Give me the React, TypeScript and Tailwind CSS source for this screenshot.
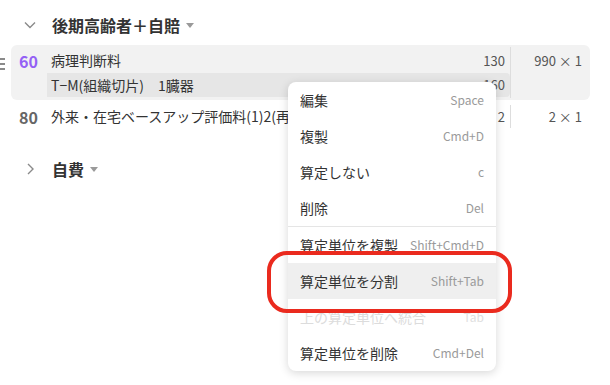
import { ReactNode } from 'react';

function ChevronDown() {
    return (
        <svg width="12" height="8" viewBox="0 0 12 8" fill="none">
            <path d="M1 1.5L6 6.5L11 1.5" stroke="#8a8a8a" strokeWidth="1.4" />
        </svg>
    );
}

function ChevronRight() {
    return (
        <svg width="12" height="12" viewBox="0 0 12 12" fill="none">
            <path d="M4 1L9 6L4 11" stroke="#8a8a8a" strokeWidth="1.4" />
        </svg>
    );
}

function Caret() {
    return (
        <svg width="8" height="5" viewBox="0 0 8 5">
            <path d="M0 0H8L4 5Z" fill="#9a9a9a" />
        </svg>
    );
}

function MenuItem({ label, shortcut, disabled, active }: { label: string; shortcut: string; disabled?: boolean; active?: boolean }) {
    return (
        <div
            className={`flex items-center justify-between h-[36px] px-[12px] ${active ? 'bg-[#efefef]' : ''}`}
        >
            <span className={`text-[14px] ${disabled ? 'text-[#dcdcdc]' : 'text-[#333]'}`}>{label}</span>
            <span className={`text-[12px] ${disabled ? 'text-[#e0e0e0]' : 'text-[#9a9a9a]'}`}>{shortcut}</span>
        </div>
    );
}

function Section({ open, title }: { open: boolean; title: ReactNode }) {
    return (
        <div className="flex items-center h-[22px] pl-[24px]">
            <div className="w-[12px] flex justify-center">{open ? <ChevronDown /> : <ChevronRight />}</div>
            <span className="ml-[16px] text-[16px] font-bold text-[#333] leading-none">{title}</span>
            <span className="ml-[6px] flex items-center">
                <Caret />
            </span>
        </div>
    );
}

export default function App() {
    return (
        <div className="relative w-[610px] h-[385px] bg-white overflow-hidden font-['Noto_Sans_CJK_JP','Noto_Sans',sans-serif] text-[#333]">
            <div className="pt-[14px]">
                {/* 後期高齢者＋自賠 */}
                <Section open title="後期高齢者＋自賠" />

                {/* selected row */}
                <div className="flex mt-[9px]">
                    <div className="w-[11px] flex flex-col gap-[3px] pt-[13px]">
                        <div className="w-[5px] h-[2px] bg-[#8a8a8a]" />
                        <div className="w-[5px] h-[2px] bg-[#8a8a8a]" />
                        <div className="w-[5px] h-[2px] bg-[#8a8a8a]" />
                    </div>
                    <div className="flex w-[579px] h-[55px] rounded-md bg-[#f2f2f2]">
                        <div className="w-[36px] pl-[8px] pt-[3px]">
                            <div className="h-[25px] flex items-center text-[16px] font-bold text-[#9461f5]">60</div>
                        </div>
                        <div className="w-[463px] pt-[3px]">
                            <div className="h-[25px] flex items-center justify-between pl-[4px] pr-[5px]">
                                <span className="text-[14px]">病理判断料</span>
                                <span className="text-[13px] text-[#555]">130</span>
                            </div>
                            <div className="h-[24px] flex items-center justify-between pl-[4px] pr-[5px] bg-[#e6e6e6] rounded-r">
                                <span className="text-[14px]">T−M(組織切片)　1臓器</span>
                                <span className="text-[13px] text-[#555]">160</span>
                            </div>
                        </div>
                        <div className="flex-1 my-[2px] border-l border-[#dddddd] pt-[1px]">
                            <div className="h-[25px] flex items-center justify-end pr-[8px] text-[13px] text-[#555]">990 × 1</div>
                        </div>
                    </div>
                </div>

                {/* row 2 */}
                <div className="flex mt-[5px] ml-[11px] w-[579px] h-[23px]">
                    <div className="w-[36px] pl-[8px] flex items-center text-[16px] font-bold text-[#666]">80</div>
                    <div className="w-[463px] min-w-0 flex items-center justify-between pl-[4px] pr-[5px]">
                        <span className="text-[14px] whitespace-nowrap overflow-hidden">外来・在宅ベースアップ評価料(1)2(再診時)</span>
                        <span className="text-[13px] text-[#555] pl-[8px]">2</span>
                    </div>
                    <div className="flex-1 border-l border-[#dddddd] flex items-center justify-end pr-[8px] text-[13px] text-[#555]">2 × 1</div>
                </div>

                {/* 自費 */}
                <div className="mt-[30px]">
                    <Section open={false} title="自費" />
                </div>
            </div>

            {/* context menu */}
            <div className="absolute left-[288px] top-[82px] w-[208px] rounded-lg bg-white shadow-[0_2px_10px_rgba(0,0,0,0.16)] overflow-hidden">
                <MenuItem label="編集" shortcut="Space" />
                <MenuItem label="複製" shortcut="Cmd+D" />
                <MenuItem label="算定しない" shortcut="c" />
                <MenuItem label="削除" shortcut="Del" />
                <div className="h-px bg-[#e5e5e5]" />
                <MenuItem label="算定単位を複製" shortcut="Shift+Cmd+D" />
                <MenuItem label="算定単位を分割" shortcut="Shift+Tab" active />
                <MenuItem label="上の算定単位へ統合" shortcut="Tab" disabled />
                <MenuItem label="算定単位を削除" shortcut="Cmd+Del" />
            </div>

            {/* red annotation */}
            <div className="absolute left-[267px] top-[251px] w-[245px] h-[62px] rounded-[20px] border-[4px] border-[#ea2a1e]" />
        </div>
    );
}
